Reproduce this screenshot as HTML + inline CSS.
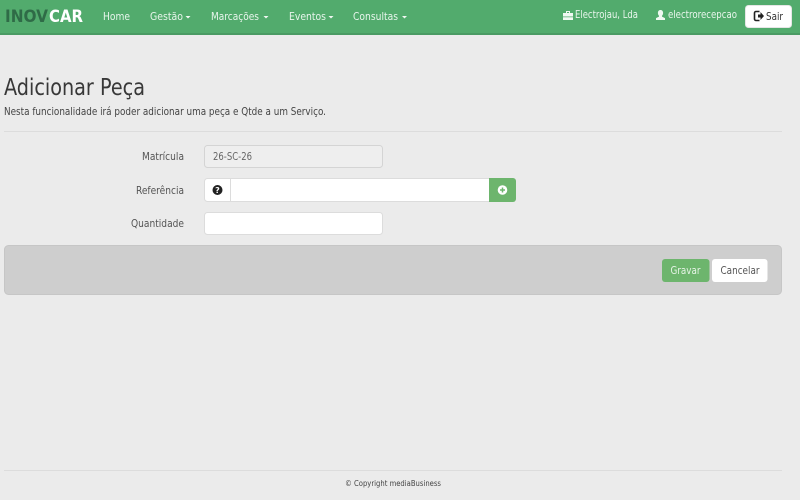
<!DOCTYPE html>
<html lang="pt">
<head>
<meta charset="utf-8">
<title>Adicionar Peça</title>
<style>
html,body{margin:0;padding:0;width:800px;height:500px;overflow:hidden;background:#ebebeb}
svg{display:block}
text{font-family:"DejaVu Sans","Liberation Sans",sans-serif}
</style>
</head>
<body>
<svg width="800" height="500" viewBox="0 0 800 500" xmlns="http://www.w3.org/2000/svg">
<rect width="800" height="500" fill="#ebebeb"/>
<!-- navbar -->
<rect width="800" height="33" fill="#52ab6d"/>
<rect y="33" width="800" height="2" fill="#4a9a63"/>
<text x="5" y="22" font-size="17" font-weight="700" fill="#2f6b47" textLength="43" lengthAdjust="spacingAndGlyphs">INOV</text>
<text x="49" y="22" font-size="17" font-weight="700" fill="#fff" textLength="34" lengthAdjust="spacingAndGlyphs">CAR</text>
<g font-size="10.500" fill="#e8f5ec">
<text x="103" y="20" textLength="27" lengthAdjust="spacingAndGlyphs">Home</text>
<text x="150" y="20" textLength="33" lengthAdjust="spacingAndGlyphs">Gestão</text>
<text x="211" y="20" textLength="48" lengthAdjust="spacingAndGlyphs">Marcações</text>
<text x="289" y="20" textLength="37" lengthAdjust="spacingAndGlyphs">Eventos</text>
<text x="353" y="20" textLength="45" lengthAdjust="spacingAndGlyphs">Consultas</text>
<text x="575" y="18" textLength="63" lengthAdjust="spacingAndGlyphs">Electrojau, Lda</text>
<text x="668" y="18" textLength="69" lengthAdjust="spacingAndGlyphs">electrorecepcao</text>
</g>
<g fill="#f0f8f2">
<path d="M185.500 16h5l-2.500 2.500z"/>
<path d="M263.500 16h5l-2.500 2.500z"/>
<path d="M328.500 16h5l-2.500 2.500z"/>
<path d="M402 16h5l-2.500 2.500z"/>
<!-- briefcase -->
<path d="M563 13h10v3.500h-10zM563 17.300h10V20h-10zM566 13v-2h4v2h-1v-1h-2v1z"/>
<!-- user -->
<path d="M660.500 10c1.700 0 2.600 1.300 2.600 3 0 1.200-.5 2.200-1.100 2.800v.8l3 1.500V20h-9v-1.900l3-1.500v-.8c-.6-.6-1.100-1.600-1.100-2.800 0-1.700.9-3 2.600-3z"/>
</g>
<!-- Sair button -->
<rect x="745.500" y="5.500" width="46" height="22" rx="3" fill="#fff" stroke="#e6e6e6"/>
<path d="M759.500 11.500h-3.500a1.500 1.500 0 0 0-1.500 1.500v6a1.500 1.500 0 0 0 1.500 1.500h3.500" fill="none" stroke="#222" stroke-width="1.600"/>
<path d="M758 14.500h2.500v-2.500l3.500 4-3.500 4v-2.500H758z" fill="#222"/>
<text x="766" y="20" font-size="10.500" fill="#333" textLength="17" lengthAdjust="spacingAndGlyphs">Sair</text>
<!-- heading -->
<text x="4" y="95" font-size="23" fill="#383838" textLength="141" lengthAdjust="spacingAndGlyphs">Adicionar Peça</text>
<text x="4" y="115" font-size="10.500" fill="#444" textLength="322" lengthAdjust="spacingAndGlyphs">Nesta funcionalidade irá poder adicionar uma peça e Qtde a um Serviço.</text>
<rect x="4" y="131" width="778" height="1" fill="#dcdcdc"/>
<!-- labels -->
<g font-size="10.500" fill="#555">
<text x="142" y="160" textLength="42" lengthAdjust="spacingAndGlyphs">Matrícula</text>
<text x="136" y="194" textLength="48" lengthAdjust="spacingAndGlyphs">Referência</text>
<text x="131" y="227" textLength="53" lengthAdjust="spacingAndGlyphs">Quantidade</text>
</g>
<!-- Matricula -->
<rect x="204.500" y="145.500" width="178" height="22" rx="3" fill="#eeeeee" stroke="#d4d4d4"/>
<text x="213" y="160" font-size="10.500" fill="#666" textLength="39" lengthAdjust="spacingAndGlyphs">26-SC-26</text>
<!-- Referencia -->
<rect x="204.500" y="178.500" width="300" height="23" rx="3" fill="#fff" stroke="#dcdcdc"/>
<rect x="230" y="179" width="1" height="23" fill="#dcdcdc"/>
<circle cx="217.500" cy="190" r="5" fill="#222"/>
<text x="217.500" y="193" font-size="8" font-weight="700" fill="#fff" text-anchor="middle">?</text>
<path d="M489 178h24a3 3 0 0 1 3 3v18a3 3 0 0 1-3 3h-24z" fill="#6db56d"/>
<circle cx="502.500" cy="190" r="4.800" fill="#fff"/>
<path d="M502.500 187.500v5M500 190h5" stroke="#6db56d" stroke-width="1.500"/>
<!-- Quantidade -->
<rect x="204.500" y="212.500" width="178" height="22" rx="3" fill="#fff" stroke="#dcdcdc"/>
<!-- panel -->
<rect x="4.500" y="245.500" width="777" height="49" rx="4" fill="#cecece" stroke="#c6c6c6"/>
<rect x="662" y="259" width="47.500" height="23" rx="3" fill="#6db56d"/>
<text x="670.500" y="274" font-size="10.500" fill="#e6f3e6" textLength="30" lengthAdjust="spacingAndGlyphs">Gravar</text>
<rect x="712" y="259" width="55.500" height="23" rx="3" fill="#fff"/>
<text x="720.500" y="274" font-size="10.500" fill="#555" textLength="39" lengthAdjust="spacingAndGlyphs">Cancelar</text>
<!-- footer -->
<rect x="4" y="470" width="778" height="1" fill="#dcdcdc"/>
<text x="345" y="486" font-size="8" fill="#444" textLength="96" lengthAdjust="spacingAndGlyphs">© Copyright mediaBusiness</text>
</svg>
</body>
</html>
